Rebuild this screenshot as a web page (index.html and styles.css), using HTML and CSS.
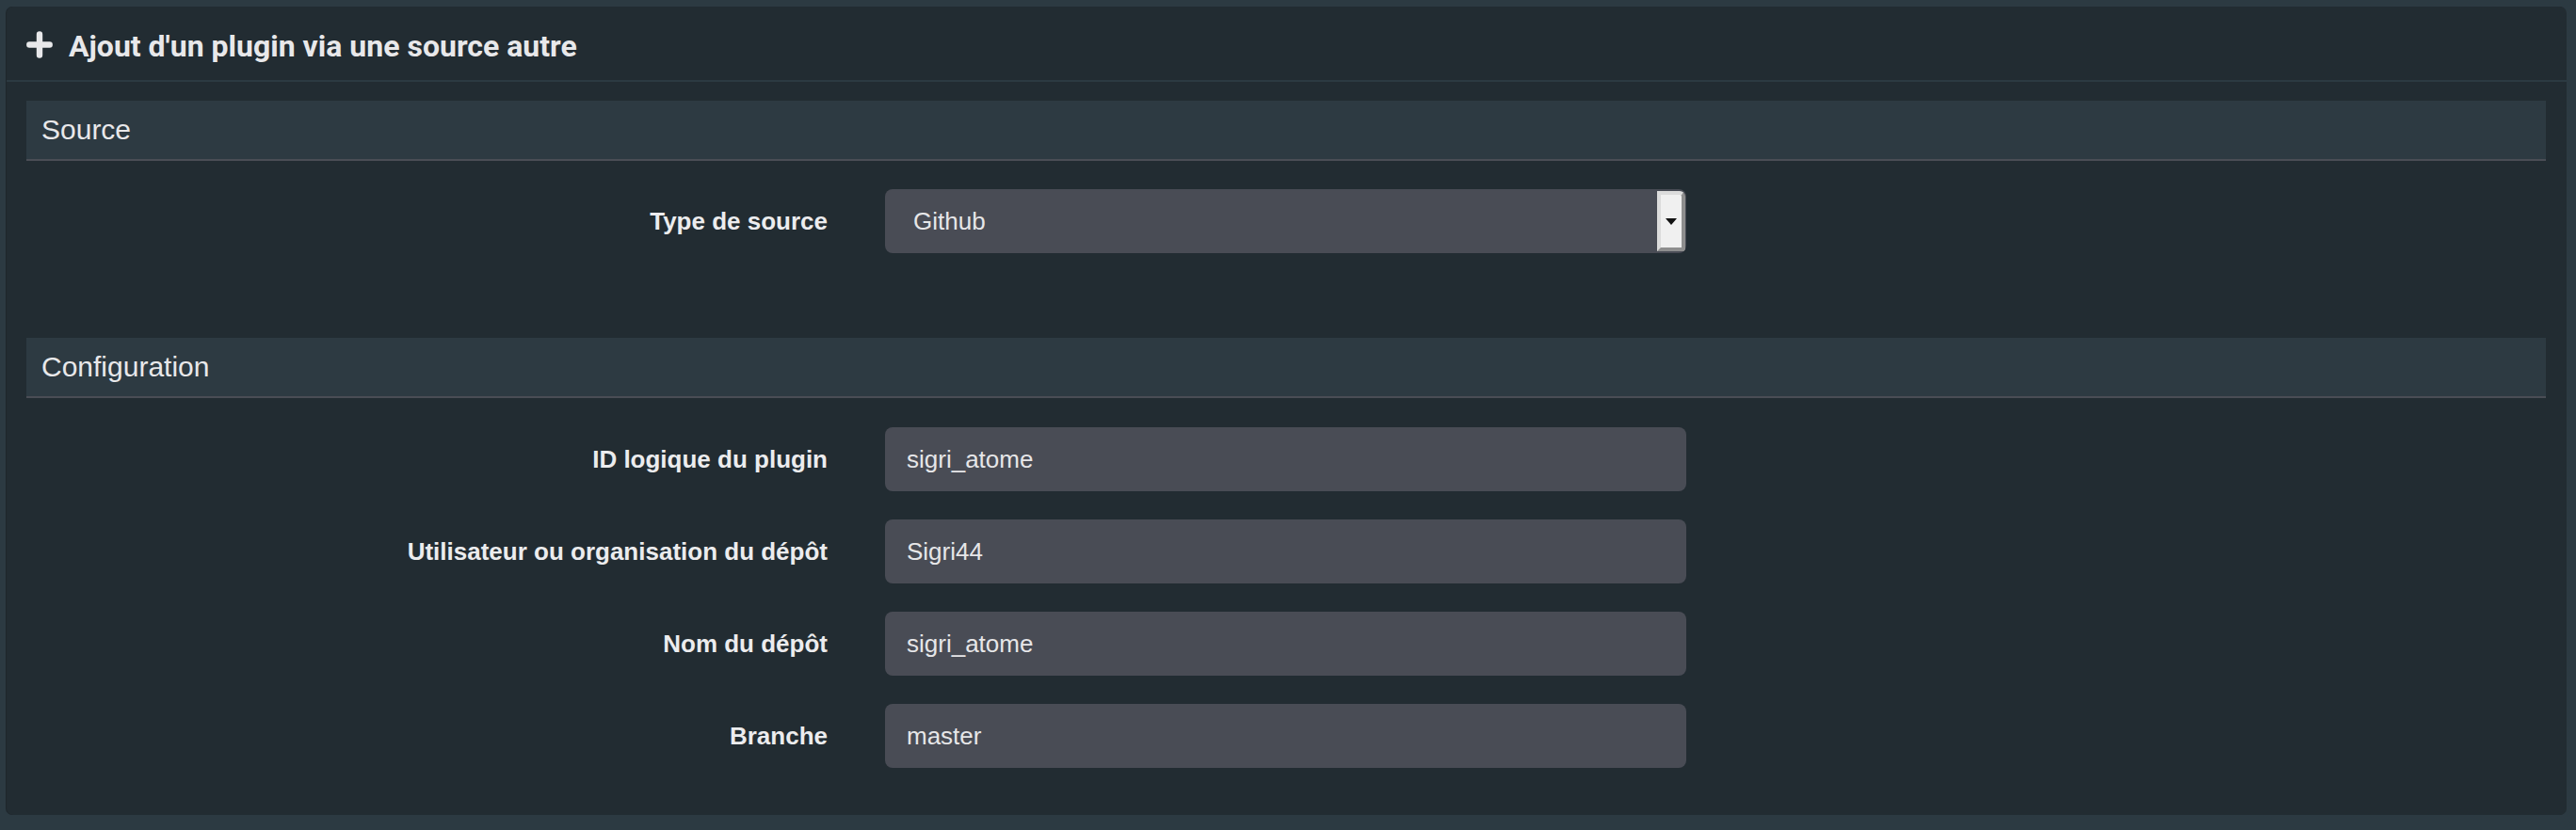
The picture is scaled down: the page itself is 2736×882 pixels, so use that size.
FILE: index.html
```html
<!DOCTYPE html>
<html lang="fr">
<head>
<meta charset="utf-8">
<title>Ajout d'un plugin</title>
<link rel="stylesheet" href="styles.css">
</head>
<body>
<div class="panel">
  <div class="panel-heading">
    <svg class="plus-icon" width="28" height="29" viewBox="0 0 28 29" aria-hidden="true">
      <path d="M3.3 14.5 H24.7 M14 3.5 V25.5" stroke="#e8e8ea" stroke-width="6.4" stroke-linecap="round" fill="none"/>
    </svg>
    <h3 class="panel-title">Ajout d'un plugin via une source autre</h3>
  </div>
  <div class="panel-body">
    <div class="fieldset">
      <div class="legend">Source</div>
      <div class="form-rows first-rows">
        <div class="form-row">
          <label class="form-label">Type de source</label>
          <div class="select-control">
            <span class="select-value">Github</span>
            <span class="select-button"><span class="caret"></span></span>
          </div>
        </div>
      </div>
    </div>
    <div class="fieldset config">
      <div class="legend">Configuration</div>
      <div class="form-rows config-rows">
        <div class="form-row">
          <label class="form-label">ID logique du plugin</label>
          <div class="input-control">sigri_atome</div>
        </div>
        <div class="form-row">
          <label class="form-label">Utilisateur ou organisation du dépôt</label>
          <div class="input-control">Sigri44</div>
        </div>
        <div class="form-row">
          <label class="form-label">Nom du dépôt</label>
          <div class="input-control">sigri_atome</div>
        </div>
        <div class="form-row">
          <label class="form-label">Branche</label>
          <div class="input-control">master</div>
        </div>
      </div>
    </div>
  </div>
</div>
</body>
</html>
```

FILE: styles.css
```css
html, body {
  margin: 0;
  padding: 0;
}

body {
  background: #2c3a42;
  padding: 7px 10px 16px 7px;
  font-family: "Liberation Sans", Arial, Helvetica, sans-serif;
  color: #e6e6e8;
}

.panel {
  background: #222c32;
  border-radius: 7px;
  box-shadow: -1px 0 0 #1e262b;
}

.panel-heading {
  display: flex;
  align-items: center;
  height: 40px;
  padding: 22px 21px 16px 21px;
  border-bottom: 2px solid #2c3a42;
}

.plus-icon {
  display: block;
  flex: none;
  margin-right: 17px;
  margin-bottom: 3px;
}

.panel-title {
  margin: 0;
  font-family: Roboto, "Liberation Sans", sans-serif;
  font-weight: 700;
  font-size: 32px;
  line-height: 40px;
  color: #e8e8ea;
}

.panel-body {
  padding: 20px 22px 50px 21px;
}

.legend {
  height: 62px;
  display: flex;
  align-items: center;
  padding-left: 16px;
  background: #2d3a42;
  border-bottom: 2px solid #4a4d55;
  font-size: 30px;
  color: #e8e8ea;
}

.form-rows {
  display: flex;
  flex-direction: column;
  gap: 30px;
}

.first-rows {
  margin-top: 30px;
}

.config {
  margin-top: 90px;
}

.config-rows {
  margin-top: 31px;
}

.form-row {
  display: grid;
  grid-template-columns: 851px 851px;
  column-gap: 61px;
  align-items: center;
}

.form-label {
  text-align: right;
  font-weight: bold;
  font-size: 26px;
  color: #ececee;
}

.input-control,
.select-control {
  height: 68px;
  box-sizing: border-box;
  border-radius: 8px;
  background: #494c55;
  font-size: 26px;
  color: #e6e6e8;
  display: flex;
  align-items: center;
}

.input-control {
  padding-left: 23px;
}

.select-control {
  padding-left: 30px;
  padding-right: 1px;
  overflow: hidden;
}

.select-value {
  flex: 1;
}

.select-button {
  flex: none;
  width: 30px;
  height: 64px;
  box-sizing: border-box;
  background: #f0f0f0;
  border: 4px solid;
  border-color: #dcdcdc #8e8e8e #8e8e8e #dcdcdc;
  border-top-right-radius: 6px;
  display: flex;
  align-items: center;
  justify-content: center;
}

.caret {
  width: 0;
  height: 0;
  border-left: 6px solid transparent;
  border-right: 6px solid transparent;
  border-top: 7px solid #111;
  margin-top: 1px;
}
```
